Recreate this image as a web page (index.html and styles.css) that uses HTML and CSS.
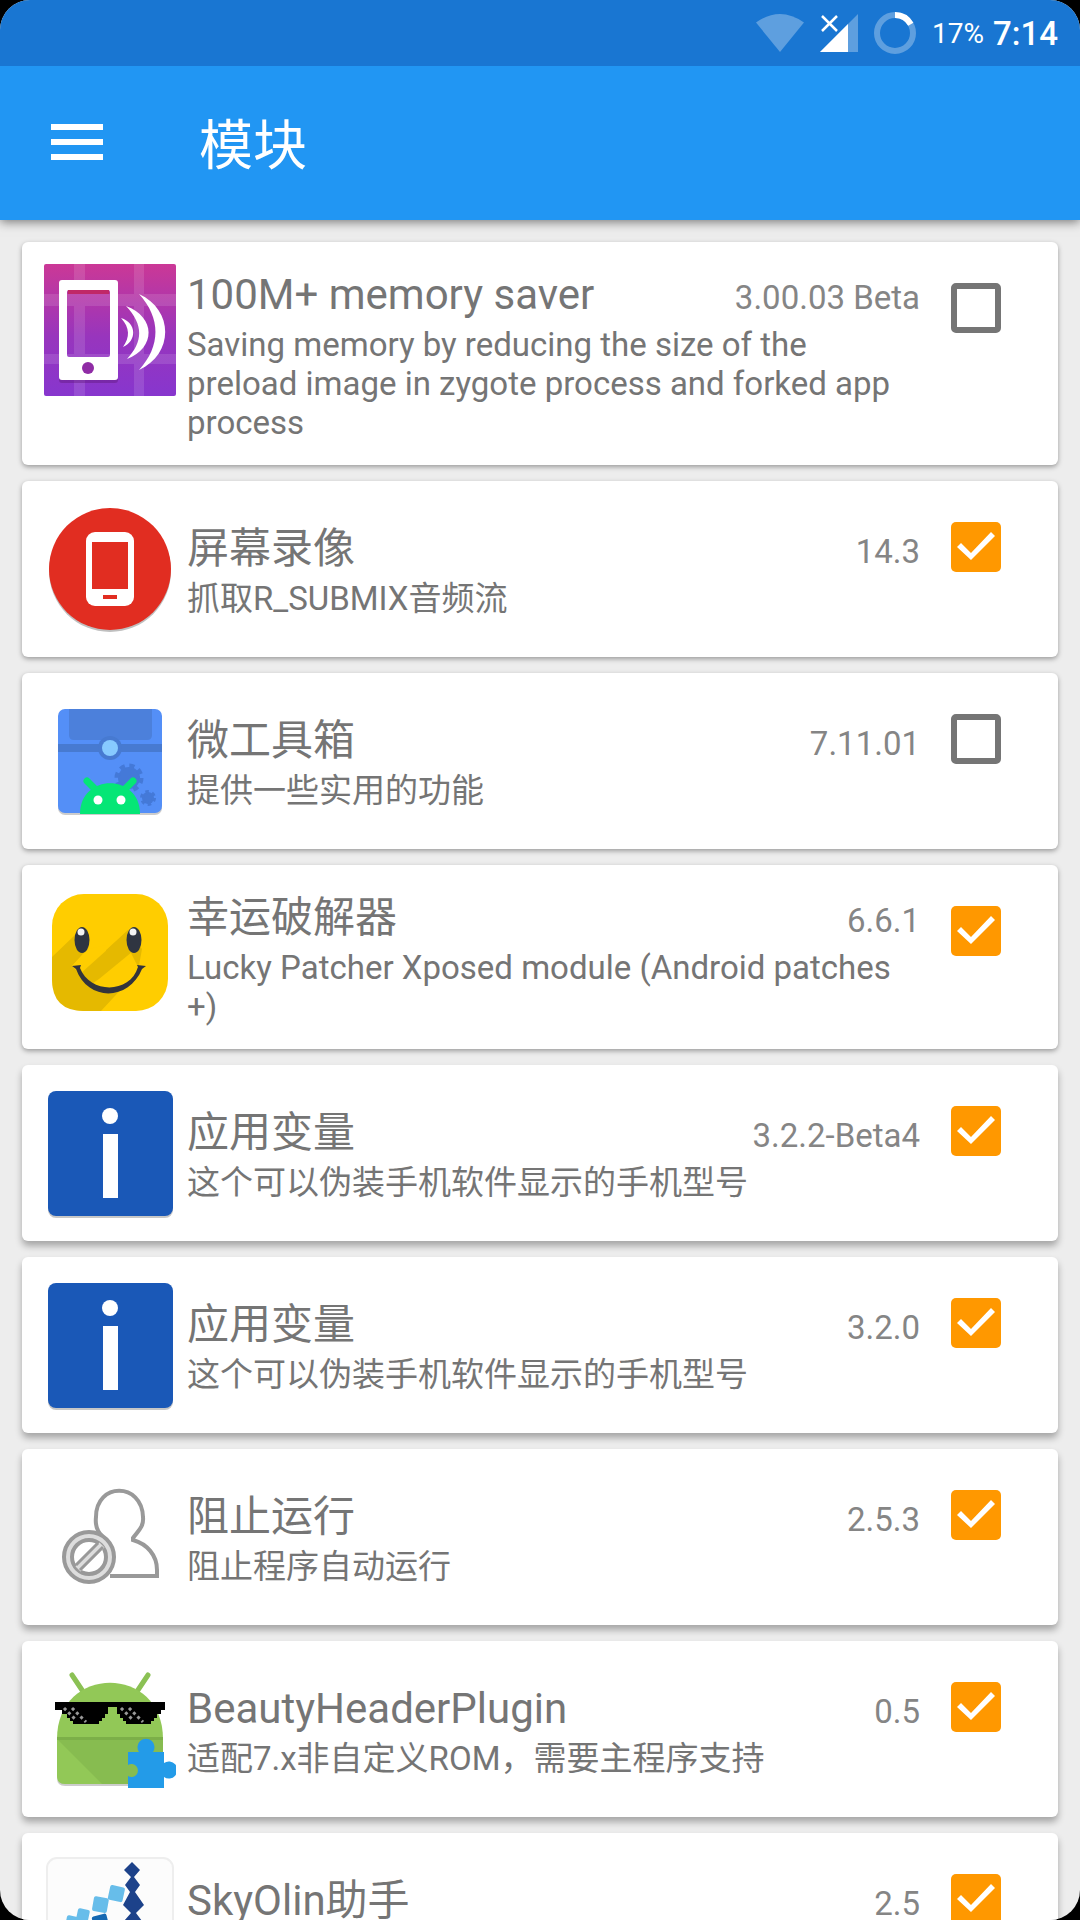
FILE: index.html
```html
<!DOCTYPE html>
<html lang="zh-CN">
<head>
    <meta charset="UTF-8">
    <meta name="viewport" content="width=device-width, initial-scale=1.0">
    <title>模块</title>
    <link rel="stylesheet" href="styles.css">
</head>
<body>
    <div class="screen">
        <!-- Status Bar -->
        <div class="status-bar">
            <svg width="48" height="38" viewBox="0 0 48 38">
                <path d="M0 8.500Q24 -8.500 48 8.500L24 38Z" fill="#fff" fill-opacity=".3"/>
            </svg>
            <svg width="38" height="38" viewBox="0 0 38 38">
                <path d="M38 0V38H0Z" fill="#fff" fill-opacity=".3"/>
                <path d="M28 10V38H0Z" fill="#fff"/>
                <path d="M2 2L17 17M17 2L2 17" stroke="#fff" stroke-width="2.500"/>
            </svg>
            <svg width="42" height="42" viewBox="0 0 42 42" fill="none" stroke="#fff" stroke-width="6">
                <circle cx="21" cy="21" r="18" stroke-opacity=".3"/>
                <path d="M21 3A18 18 0 0 1 36.800 12.300"/>
            </svg>
            <span class="battery">17%</span>
            <span class="clock">7:14</span>
        </div>

        <!-- Toolbar -->
        <header class="toolbar">
            <button class="menu-button" aria-label="菜单">
                <svg width="52" height="36" viewBox="0 0 52 36" fill="#fff">
                    <path d="M0 0H52V6H0ZM0 15H52V21H0ZM0 30H52V36H0Z"/>
                </svg>
            </button>
            <h1>模块</h1>
        </header>

        <!-- Module List -->
        <main class="module-list">
            <article class="card">
                <svg class="icon" viewBox="0 0 132 132">
                    <defs>
                        <linearGradient id="purple" x1="0" y1="0" x2="0" y2="1">
                            <stop offset="0" stop-color="#cb3896"/>
                            <stop offset=".55" stop-color="#9835bd"/>
                            <stop offset="1" stop-color="#8736ce"/>
                        </linearGradient>
                    </defs>
                    <rect width="132" height="132" rx="2" fill="url(#purple)"/>
                    <path d="M30 0H41V132H30ZM90 0H100V132H90ZM0 30H132V42H0ZM0 90H132V100H0Z" fill="#fff" fill-opacity=".12"/>
                    <rect x="15" y="108" width="59" height="11" rx="3" fill="#5d1676" fill-opacity=".4"/>
                    <path fill-rule="evenodd" fill="#fff" d="M18 16H71Q74 16 74 19V113Q74 116 71 116H18Q15 116 15 113V19Q15 16 18 16ZM25 26Q23 26 23 28V91Q23 93 25 93H64Q66 93 66 91V28Q66 26 64 26Z"/>
                    <path d="M24 26H65V30H24Z" fill="#c02867"/>
                    <circle cx="44" cy="104" r="6" fill="#8f2ca5"/>
                    <path d="M77 54C93 59 93 77 79 83C86 73 86 64 77 54ZM82 42C112 53 112 84 83 95C99 78 100 61 82 42ZM95 30C130 46 130 90 95 106C117 82 117 54 95 30Z" fill="#fff"/>
                </svg>
                <div class="info">
                    <div class="heading">
                        <h2><label for="module1">100M+ memory saver</label></h2>
                        <span class="version">3.00.03 Beta</span>
                    </div>
                    <p>Saving memory by reducing the size of the preload image in zygote process and forked app process</p>
                </div>
                <input type="checkbox" id="module1">
            </article>

            <article class="card">
                <svg class="icon" viewBox="0 0 132 132">
                    <circle cx="66" cy="68" r="61" fill="#000" fill-opacity=".25"/>
                    <circle cx="66" cy="66" r="61" fill="#e12d21"/>
                    <rect x="42" y="29" width="48" height="74" rx="9" fill="#fff"/>
                    <path d="M48 39H84V86H48ZM59 92H73V96H59Z" fill="#e12d21"/>
                </svg>
                <div class="info">
                    <div class="heading">
                        <h2><label for="module2">屏幕录像</label></h2>
                        <span class="version">14.3</span>
                    </div>
                    <p>抓取R_SUBMIX音频流</p>
                </div>
                <input type="checkbox" id="module2" checked>
            </article>

            <article class="card">
                <svg class="icon" viewBox="0 0 132 132">
                    <rect x="14" y="16" width="104" height="104" rx="7" fill="#000" fill-opacity=".2"/>
                    <rect x="14" y="14" width="104" height="104" rx="7" fill="#548ff7"/>
                    <path d="M25 14H108V40Q108 45 103 45H30Q25 45 25 40Z" fill="#4c80db"/>
                    <path d="M14 49H118V57H14Z" fill="#477ad1"/>
                    <circle cx="66" cy="53" r="12" fill="#477ad1"/>
                    <circle cx="66" cy="53" r="8" fill="#87caff"/>
                    <g fill="#4479d8" stroke="#4479d8">
                        <circle cx="85" cy="83" r="11" stroke="none"/>
                        <circle cx="85" cy="83" r="12" fill="none" stroke-width="5" stroke-dasharray="5 4.420"/>
                        <circle cx="104" cy="103" r="6" stroke="none"/>
                        <circle cx="104" cy="103" r="6" fill="none" stroke-width="4" stroke-dasharray="3.200 3.080"/>
                    </g>
                    <path d="M36 119C36 78 96 78 96 119Z" fill="#05e676"/>
                    <path d="M43 86L53 96M89 86L79 96" stroke="#05e676" stroke-width="7" stroke-linecap="round"/>
                    <circle cx="54" cy="105" r="4.500" fill="#fff"/>
                    <circle cx="77" cy="105" r="4.500" fill="#fff"/>
                </svg>
                <div class="info">
                    <div class="heading">
                        <h2><label for="module3">微工具箱</label></h2>
                        <span class="version">7.11.01</span>
                    </div>
                    <p>提供一些实用的功能</p>
                </div>
                <input type="checkbox" id="module3">
            </article>

            <article class="card">
                <svg class="icon" viewBox="0 0 132 132">
                    <rect x="8" y="7" width="116" height="117" rx="32" fill="#ffcd00"/>
                    <path d="M8 70L31 48L45 60L28 79L36 87L84 43L98 62L94 84L57 124H40Q8 124 8 92Z" fill="#e5b900"/>
                    <path d="M45 62L28 79L34 84L45 84L62 68V58Z" fill="#ffcd00"/>
                    <path d="M84 60L94 80C86 107 58 107 46 98L36 82Z" fill="#ffcd00"/>
                    <path d="M83 45L36 87L46 98L55 92L94 60Z" fill="#e5b900"/>
                    <ellipse cx="38" cy="53" rx="7.500" ry="13" fill="#2f3541"/>
                    <ellipse cx="90" cy="53" rx="7.500" ry="13" fill="#2f3541"/>
                    <circle cx="37" cy="45" r="3.500" fill="#f3f3f3"/>
                    <circle cx="89" cy="45" r="3.500" fill="#f3f3f3"/>
                    <path d="M28 79L37 78L36 81C46 107 86 107 94 80L93 78L102 79L98 82C85 114 44 115 32 82Z" fill="#33343c"/>
                </svg>
                <div class="info">
                    <div class="heading">
                        <h2><label for="module4">幸运破解器</label></h2>
                        <span class="version">6.6.1</span>
                    </div>
                    <p>Lucky Patcher Xposed module (Android patches +)</p>
                </div>
                <input type="checkbox" id="module4" checked>
            </article>

            <article class="card raised">
                <svg class="icon" viewBox="0 0 132 132">
                    <rect x="4" y="6" width="125" height="125" rx="8" fill="#000" fill-opacity=".22"/>
                    <rect x="4" y="4" width="125" height="125" rx="8" fill="#1a58b7"/>
                    <circle cx="66" cy="29" r="8" fill="#fff"/>
                    <path d="M59 47H74V111H59Z" fill="#fff"/>
                </svg>
                <div class="info">
                    <div class="heading">
                        <h2><label for="module5">应用变量</label></h2>
                        <span class="version">3.2.2-Beta4</span>
                    </div>
                    <p>这个可以伪装手机软件显示的手机型号</p>
                </div>
                <input type="checkbox" id="module5" checked>
            </article>

            <article class="card raised">
                <svg class="icon" viewBox="0 0 132 132">
                    <rect x="4" y="6" width="125" height="125" rx="8" fill="#000" fill-opacity=".22"/>
                    <rect x="4" y="4" width="125" height="125" rx="8" fill="#1a58b7"/>
                    <circle cx="66" cy="29" r="8" fill="#fff"/>
                    <path d="M59 47H74V111H59Z" fill="#fff"/>
                </svg>
                <div class="info">
                    <div class="heading">
                        <h2><label for="module6">应用变量</label></h2>
                        <span class="version">3.2.0</span>
                    </div>
                    <p>这个可以伪装手机软件显示的手机型号</p>
                </div>
                <input type="checkbox" id="module6" checked>
            </article>

            <article class="card raised">
                <svg class="icon" viewBox="0 0 132 132" fill="none" stroke="#999" stroke-width="4">
                    <path d="M58 65C53 60 51 54 52 46C52 11 98 11 99 46C100 56 94 60 89 67V69C103 73 113 84 113 99V105H66"/>
                    <circle cx="45" cy="86" r="21" stroke="#ddd" stroke-width="8"/>
                    <circle cx="45" cy="86" r="25"/>
                    <circle cx="45" cy="86" r="17"/>
                    <path d="M34 98L58 74" stroke="#ddd" stroke-width="7"/>
                    <path d="M32 94L54 72M36 99L59 76" stroke-width="3"/>
                </svg>
                <div class="info">
                    <div class="heading">
                        <h2><label for="module7">阻止运行</label></h2>
                        <span class="version">2.5.3</span>
                    </div>
                    <p>阻止程序自动运行</p>
                </div>
                <input type="checkbox" id="module7" checked>
            </article>

            <article class="card raised">
                <svg class="icon" viewBox="0 0 132 132">
                    <path d="M28 12L38 27M104 12L94 27" stroke="#8bc154" stroke-width="5" stroke-linecap="round"/>
                    <path d="M13 76H119V115Q119 123 111 123H21Q13 123 13 115Z" fill="#000" fill-opacity=".2"/>
                    <path d="M13 76C13 1 119 1 119 76V113Q119 121 111 121H21Q13 121 13 113Z" fill="#92c857"/>
                    <path d="M13 74H119V77H13Z" fill="#7caf49"/>
                    <path d="M14 77H119V95L84 121H58Z" fill="#87bc50"/>
                    <path d="M11 39H121V47H117V51H113V55H110V58H107V61H82V58H79V55H76V51H73V44H64V51H61V55H58V58H55V61H29V58H26V55H23V51H18V47H11Z" fill="#000"/>
                    <path d="M20 45L32 57M28 45L42 59M77 45L89 57M85 45L99 59" stroke="#999" stroke-width="3" stroke-dasharray="3 3"/>
                    <path d="M84 89H95A8.500 8.500 0 1 1 109 89H120V100A8.500 8.500 0 1 1 120 114V125H84V113A6.500 6.500 0 1 0 84 102Z" fill="#239be8"/>
                </svg>
                <div class="info">
                    <div class="heading">
                        <h2><label for="module8">BeautyHeaderPlugin</label></h2>
                        <span class="version">0.5</span>
                    </div>
                    <p>适配7.x非自定义ROM，需要主程序支持</p>
                </div>
                <input type="checkbox" id="module8" checked>
            </article>

            <article class="card raised">
                <svg class="icon" viewBox="0 0 132 132">
                    <rect x="3" y="3" width="126" height="126" rx="10" fill="#fcfcfc" stroke="#eee" stroke-width="2"/>
                    <path d="M88 7L96 15L90 22L96 30L91 37L100 50L92 58L98 66L89 75L80 66L87 58L79 50L86 37L81 30L87 22L80 15Z" fill="#1d428a"/>
                    <g fill="#67bdea">
                        <rect x="65" y="31" width="15" height="15" rx="2" transform="rotate(12 72 38)"/>
                        <rect x="49" y="42" width="15" height="15" rx="2" transform="rotate(10 56 49)"/>
                        <rect x="33" y="54" width="12" height="12" rx="2" transform="rotate(12 39 60)"/>
                        <rect x="22" y="61" width="12" height="12" rx="2" transform="rotate(12 28 67)"/>
                    </g>
                    <rect x="49" y="60" width="15" height="15" rx="2" transform="rotate(-15 56 67)" fill="#1669b2"/>
                </svg>
                <div class="info">
                    <div class="heading">
                        <h2><label for="module9">SkyOlin助手</label></h2>
                        <span class="version">2.5</span>
                    </div>
                    <p></p>
                </div>
                <input type="checkbox" id="module9" checked>
            </article>
        </main>
    </div>
</body>
</html>
```
FILE: styles.css
```css
* {
    box-sizing: border-box;
}

body {
    margin: 0;
    background-color: #000;
    font-family: Roboto, "Noto Sans CJK SC", sans-serif;
}

.screen {
    display: flex;
    flex-direction: column;
    height: 100vh;
    border-radius: 30px;
    overflow: hidden;
    background-color: #ededed;
}

.status-bar {
    display: flex;
    flex: none;
    align-items: center;
    justify-content: flex-end;
    gap: 16px;
    height: 66px;
    padding-right: 22px;
    background-color: #1976d2;
    color: white;
    z-index: 2;
}

.battery {
    font-size: 28px;
}

.clock {
    margin-left: -7px;
    font-size: 33px;
    font-weight: 500;
}

.toolbar {
    display: flex;
    flex: none;
    align-items: center;
    gap: 96px;
    height: 154px;
    padding: 0 51px 3px;
    background-color: #2196f3;
    color: white;
    box-shadow: 0 2px 10px rgba(0,0,0,0.5);
    z-index: 1;
}

.toolbar h1 {
    margin: 0;
    font-size: 54px;
    font-weight: 400;
}

.menu-button {
    display: flex;
    padding: 0;
    border: none;
    background: none;
}

/* the list scrolls under the toolbar */
.module-list {
    display: flex;
    flex: 1;
    flex-direction: column;
    gap: 16px;
    min-height: 0;
    padding: 22px;
    overflow-y: auto;
    scrollbar-width: none;
}

.card {
    display: flex;
    flex: none;
    align-items: flex-start;
    padding: 22px 57px 22px 22px;
    border-radius: 6px;
    background-color: white;
    box-shadow: 0 2px 5px rgba(0,0,0,0.35);
}

.raised {
    box-shadow: 0 5px 7px rgba(0,0,0,0.3);
}

.icon {
    flex: none;
    width: 132px;
    height: 132px;
}

.info {
    flex: 1;
    align-self: center;
    margin: 0 31px 0 11px;
    color: #757575;
}

.heading {
    display: flex;
    align-items: baseline;
    justify-content: space-between;
    padding: 6px 0 5px;
    line-height: 50px;
}

.heading h2 {
    margin: 0;
    font-size: 42px;
    font-weight: 400;
}

.version {
    color: #858585;
    font-size: 33px;
    line-height: 39px;
}

.info p {
    min-height: 41px;
    margin: 0;
    padding-bottom: 1px;
    font-size: 33px;
    line-height: 39px;
}

input[type="checkbox"] {
    appearance: none;
    flex: none;
    width: 50px;
    height: 50px;
    margin: 19px 0 0;
    border: 6px solid #757575;
    border-radius: 5px;
}

input[type="checkbox"]:checked {
    border: none;
    background-color: #ff9800;
}

/* tick mark */
input[type="checkbox"]:checked::after {
    content: "";
    display: block;
    width: 50px;
    height: 50px;
    background-color: white;
    clip-path: polygon(6px 25px, 10px 21px, 20px 31px, 40px 10px, 44px 14px, 20px 38px);
}
```
